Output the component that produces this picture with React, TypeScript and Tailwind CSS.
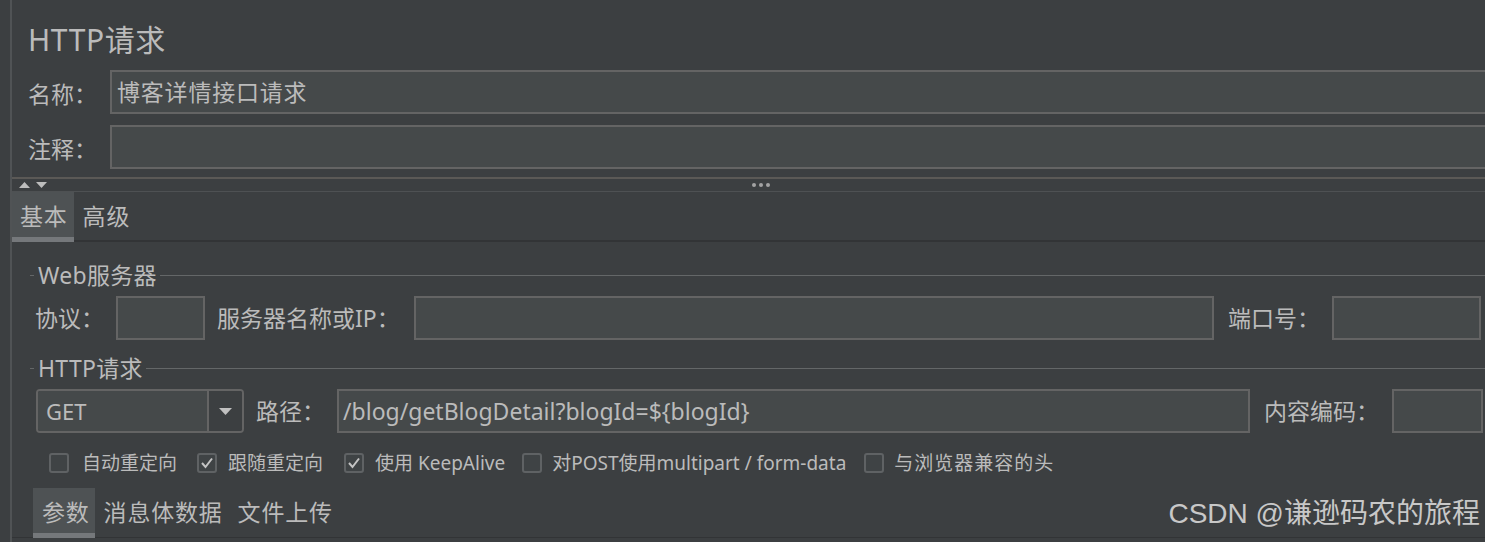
import React from 'react'

// JMeter-style "HTTP请求" sampler panel, Darcula theme

const Field = ({ className = '', children }: { className?: string; children?: React.ReactNode }) => (
  <div
    className={`h-[44px] bg-[#45494a] border-2 border-[#646464] flex items-center text-[23px] text-[#bbbbbb] ${className}`}
  >
    {children}
  </div>
)

const GroupTitle = ({ title }: { title: string }) => (
  <div className="h-[30px] flex items-center">
    <div className="ml-[18px] w-[4px] h-px bg-[#646768]" />
    <span className="ml-[4px] text-[23px] leading-[30px] tracking-[0.3px] text-[#bbbbbb]">{title}</span>
    <div className="ml-[3px] flex-1 h-px bg-[#646768]" />
  </div>
)

const Check = ({ checked }: { checked?: boolean }) => (
  <div className="w-[20px] h-[20px] shrink-0 rounded-[3px] border-2 border-[#5f6264] bg-[#3f4345] flex items-center justify-center">
    {checked && (
      <svg width="14" height="12" viewBox="0 0 14 12">
        <polyline points="2,6 5.5,10 12,1.5" fill="none" stroke="#c4c4c4" strokeWidth="2" />
      </svg>
    )}
  </div>
)

const Tab = ({ label, active, className = '' }: { label: string; active?: boolean; className?: string }) => (
  <div className={`flex flex-col ${active ? 'bg-[#4e5254]' : ''}`}>
    <div className={`flex-1 flex items-center pt-[4px] text-[23px] tracking-[0.8px] text-[#bbbbbb] ${className}`}>
      {label}
    </div>
    <div className={`h-[5px] ${active ? 'bg-[#75787b]' : ''}`} />
  </div>
)

export default function App() {
  const checks = [
    { label: '自动重定向', checked: false, cb: 'ml-0', lb: 'ml-[13px]' },
    { label: '跟随重定向', checked: true, cb: 'ml-[20px]', lb: 'ml-[11px]' },
    { label: '使用 KeepAlive', checked: true, cb: 'ml-[21px]', lb: 'ml-[11px]' },
    { label: '对POST使用multipart / form-data', checked: false, cb: 'ml-[17px]', lb: 'ml-[10px]' },
    { label: '与浏览器兼容的头', checked: false, cb: 'ml-[18px]', lb: 'ml-[10px] tracking-[1px]' },
  ]

  return (
    <div className="relative w-[1485px] h-[542px] overflow-hidden bg-[#3c3f41] flex font-['Noto_Sans','Noto_Sans_CJK_SC',sans-serif] text-[#bbbbbb]">
      <div className="w-[10px] shrink-0" />
      <div className="w-[2px] shrink-0 bg-[#505355]" />

      <div className="flex-1 flex flex-col min-w-0">
        {/* title */}
        <div className="pt-[22px] pl-[16px] h-[58px] text-[30px] leading-[36px] tracking-[0.6px]">HTTP请求</div>

        {/* name / comment */}
        <div className="mt-[12px] flex items-center">
          <div className="w-[98px] pl-[16px] text-[23px] pt-[4px]">名称：</div>
          <Field className="flex-1 -mr-[4px] pl-[5px]">
            <span className="tracking-[0.8px]">博客详情接口请求</span>
          </Field>
        </div>
        <div className="mt-[11px] flex items-center">
          <div className="w-[98px] pl-[16px] text-[23px] pt-[4px]">注释：</div>
          <Field className="flex-1 -mr-[4px]" />
        </div>

        {/* splitter */}
        <div className="mt-[8px] h-[2px] bg-[#5b5956]" />
        <div className="h-[12px] flex items-center relative">
          <svg className="ml-[7px]" width="11" height="6" viewBox="0 0 11 6">
            <polygon points="0,6 5.5,0 11,6" fill="#bdbdbd" />
          </svg>
          <svg className="ml-[6px]" width="11" height="6" viewBox="0 0 11 6">
            <polygon points="0,0 11,0 5.5,6" fill="#bdbdbd" />
          </svg>
          <div className="ml-[705px] flex gap-[3px]">
            <div className="w-[4px] h-[4px] rounded-full bg-[#a3a3a3]" />
            <div className="w-[4px] h-[4px] rounded-full bg-[#a3a3a3]" />
            <div className="w-[4px] h-[4px] rounded-full bg-[#a3a3a3]" />
          </div>
        </div>
        <div className="h-px bg-[#4e5153]" />

        {/* basic / advanced tabs */}
        <div className="h-[50px] flex shadow-[inset_0_-2px_0_#323436]">
          <Tab label="基本" active className="pl-[8px] pr-[6px]" />
          <Tab label="高级" className="pl-[9px] pr-[9px]" />
        </div>

        {/* web server group */}
        <div className="mt-[18px]">
          <GroupTitle title="Web服务器" />
        </div>
        <div className="mt-[6px] flex items-center pl-[23px] pr-[4px]">
          <div className="w-[81px] text-[23px]">协议：</div>
          <Field className="w-[89px] shrink-0" />
          <div className="w-[209px] shrink-0 pl-[12px] text-[23px] whitespace-nowrap">服务器名称或IP：</div>
          <Field className="flex-1" />
          <div className="w-[118px] shrink-0 pl-[14px] text-[23px]">端口号：</div>
          <Field className="w-[149px] shrink-0" />
        </div>

        {/* http request group */}
        <div className="mt-[13px]">
          <GroupTitle title="HTTP请求" />
        </div>
        <div className="mt-[6px] flex items-center pl-[24px] pr-[2px]">
          <div className="w-[208px] h-[44px] shrink-0 flex rounded-[4px] border-2 border-[#646464] overflow-hidden">
            <div className="flex-1 bg-[#45494a] flex items-center pl-[8px] text-[22px]">GET</div>
            <div className="w-[35px] border-l-2 border-[#646464] bg-[#3c3f41] flex items-center justify-center">
              <svg width="13" height="7" viewBox="0 0 13 7">
                <polygon points="0,0 13,0 6.5,7" fill="#c0c0c0" />
              </svg>
            </div>
          </div>
          <div className="w-[93px] shrink-0 pl-[12px] text-[23px]">路径：</div>
          <Field className="flex-1 pl-[4px]">/blog/getBlogDetail?blogId=${'{'}blogId{'}'}</Field>
          <div className="w-[142px] shrink-0 pl-[14px] text-[23px]">内容编码：</div>
          <Field className="w-[91px] shrink-0" />
        </div>

        {/* options */}
        <div className="mt-[15px] h-[30px] flex items-center pl-[37px] text-[19px] whitespace-nowrap">
          {checks.map((c) => (
            <React.Fragment key={c.label}>
              <div className={c.cb}>
                <Check checked={c.checked} />
              </div>
              <span className={c.lb}>{c.label}</span>
            </React.Fragment>
          ))}
        </div>

        {/* body tabs */}
        <div className="mt-[10px] h-[50px] flex pl-[21px] shadow-[inset_0_-1px_0_#323436]">
          <Tab label="参数" active className="pl-[9px] pr-[5px]" />
          <Tab label="消息体数据" className="pl-[9px] pr-[12px]" />
          <Tab label="文件上传" className="pl-[3px] pr-[9px]" />
        </div>
      </div>

      <div className="absolute right-[5px] top-[496px] text-[28px] leading-[36px] text-[#c8c8c8] font-['Liberation_Sans','Noto_Sans_CJK_SC',sans-serif]">
        CSDN @谦逊码农的旅程
      </div>
    </div>
  )
}
